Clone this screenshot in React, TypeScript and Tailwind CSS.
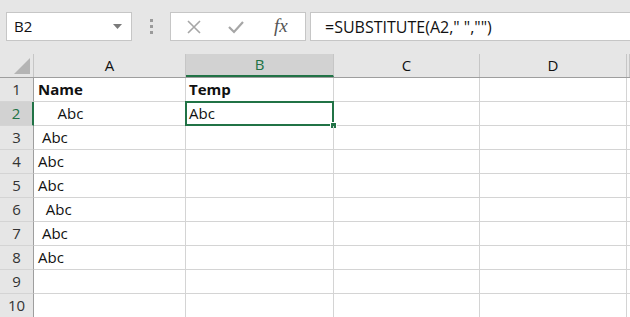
import React from "react";

const font = { fontFamily: '"Open Sans", "Noto Sans", sans-serif' };

const cols = [
  { key: "A", w: "w-[152px]" },
  { key: "B", w: "w-[148px]" },
  { key: "C", w: "w-[146px]" },
  { key: "D", w: "w-[147px]" },
  { key: "E", w: "flex-1" },
];

// leading spaces are part of the data (that's what SUBSTITUTE strips)
const colA: { text: string; bold?: boolean }[] = [
  { text: "Name", bold: true },
  { text: "     Abc" },
  { text: " Abc" },
  { text: "Abc" },
  { text: "Abc" },
  { text: "  Abc" },
  { text: " Abc" },
  { text: "Abc" },
  { text: "" },
  { text: "" },
];

const colB: Record<number, { text: string; bold?: boolean }> = {
  1: { text: "Temp", bold: true },
  2: { text: "Abc" },
};

const App: React.FC = () => {
  return (
    <div className="w-[630px] h-[317px] overflow-hidden bg-white text-[#111]" style={font}>
      {/* formula bar */}
      <div className="h-[54px] bg-[#e6e6e6] flex items-start pt-[12px] pl-[6px]">
        <div className="w-[126px] h-[29px] bg-white border border-[#c6c6c6] flex items-center justify-between pl-[7px] pr-[9px]">
          <span className="text-[15px]">B2</span>
          <svg width="9" height="5" viewBox="0 0 9 5">
            <path d="M0 0 L9 0 L4.5 5 Z" fill="#7a7a7a" />
          </svg>
        </div>
        <div className="w-[38px] h-[29px] flex flex-col items-center justify-center gap-[3px]">
          <span className="w-[3px] h-[3px] bg-[#9a9a9a]" />
          <span className="w-[3px] h-[3px] bg-[#9a9a9a]" />
          <span className="w-[3px] h-[3px] bg-[#9a9a9a]" />
        </div>
        <div className="w-[136px] h-[29px] bg-white border border-[#c6c6c6] flex items-center pl-[15px] gap-[25px]">
          <svg width="16" height="16" viewBox="0 0 16 16">
            <path d="M2 2 L14 14 M14 2 L2 14" stroke="#a6a6a6" strokeWidth="1.6" />
          </svg>
          <svg width="18" height="16" viewBox="0 0 18 16">
            <path d="M2 8 L7 13 L16 3" stroke="#a6a6a6" strokeWidth="2.2" fill="none" />
          </svg>
          <span
            className="text-[19px] italic text-[#555] ml-[4px]"
            style={{ fontFamily: '"Liberation Serif", "DejaVu Serif", serif' }}
          >
            fx
          </span>
        </div>
        <div className="flex-1 h-[29px] ml-[4px] bg-white border border-[#c6c6c6] border-r-0 flex items-center pl-[14px]">
          <span className="text-[16px] whitespace-pre">=SUBSTITUTE(A2," ","")</span>
        </div>
      </div>

      {/* column headers */}
      <div className="flex h-[24px] bg-[#e6e6e6] border-b border-[#9e9e9e]">
        <div className="w-[34px] h-full border-r border-[#c6c6c6] flex items-end justify-end pr-[3px] pb-[3px]">
          <svg width="16" height="16" viewBox="0 0 16 16">
            <path d="M16 0 L16 16 L0 16 Z" fill="#b4b4b4" />
          </svg>
        </div>
        {cols.map((c) => (
          <div
            key={c.key}
            className={`${c.w} h-full border-r border-[#c6c6c6] flex items-center justify-center text-[15px] ${
              c.key === "B" ? "bg-[#d2d2d2] text-[#217346] border-b-2 border-b-[#217346]" : ""
            }`}
          >
            {c.key !== "E" ? c.key : ""}
          </div>
        ))}
      </div>

      {/* rows */}
      {colA.map((a, i) => {
        const row = i + 1;
        const b = colB[row];
        const active = row === 2;
        return (
          <div key={row} className="flex h-[24px]">
            <div
              className={`w-[34px] h-full border-b border-[#d4d4d4] flex items-center justify-center text-[15px] ${
                active
                  ? "bg-[#d2d2d2] text-[#217346] border-r-2 border-r-[#217346]"
                  : "bg-[#e6e6e6] text-[#333] border-r border-r-[#9e9e9e]"
              }`}
            >
              {row}
            </div>
            <div
              className={`w-[152px] h-full border-r border-b border-[#d4d4d4] flex items-end pl-[4px] pb-[1px] text-[15px] whitespace-pre ${
                a.bold ? "font-bold" : ""
              }`}
            >
              {a.text}
            </div>
            <div
              className={`relative w-[148px] h-full border-r border-b border-[#d4d4d4] flex items-end pl-[3px] pb-[1px] text-[15px] ${
                b?.bold ? "font-bold" : ""
              }`}
            >
              {b?.text}
              {active && (
                <>
                  <div className="absolute -left-[1px] -top-[1px] -right-[1px] -bottom-[1px] border-2 border-[#217346]" />
                  <div className="absolute -right-[4px] -bottom-[4px] w-[7px] h-[7px] bg-[#217346] border border-white" />
                </>
              )}
            </div>
            <div className="w-[146px] h-full border-r border-b border-[#d4d4d4]" />
            <div className="w-[147px] h-full border-r border-b border-[#d4d4d4]" />
            <div className="flex-1 h-full border-b border-[#d4d4d4]" />
          </div>
        );
      })}
    </div>
  );
};

export default App;
